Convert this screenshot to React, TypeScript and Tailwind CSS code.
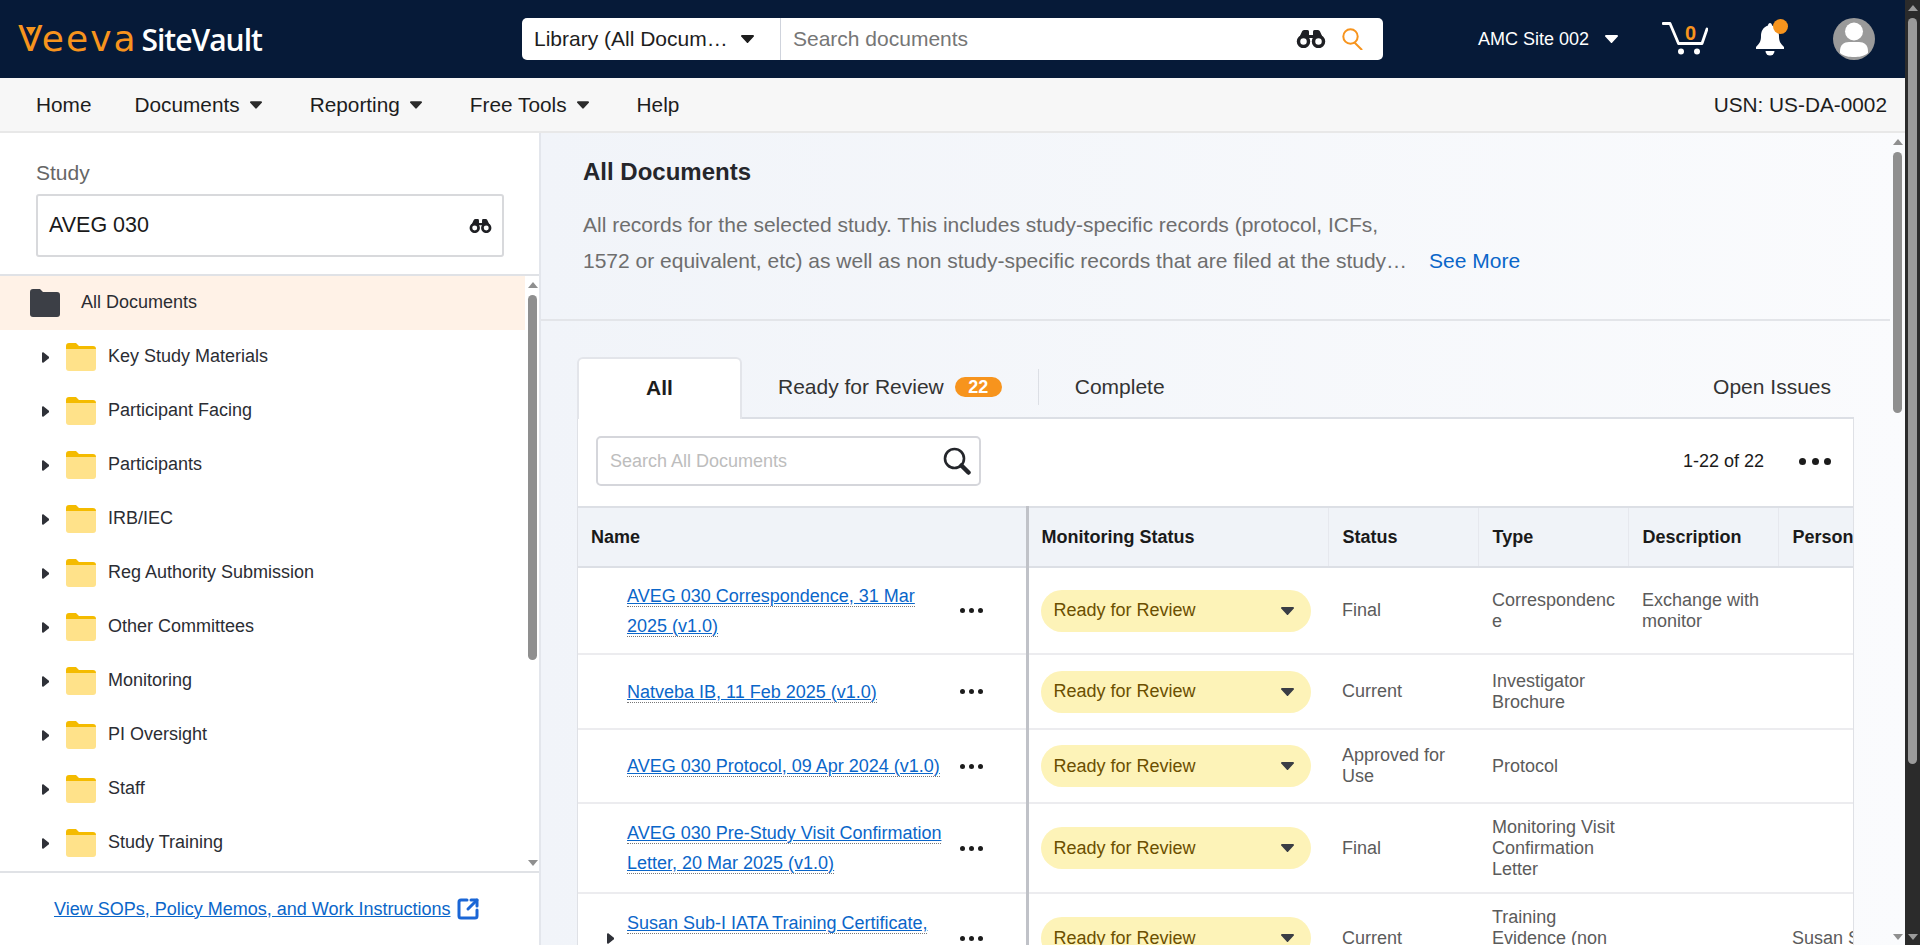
import React from 'react';
import { SquareArrowOutUpRight } from 'lucide-react';

const treeItems = [
  'Key Study Materials',
  'Participant Facing',
  'Participants',
  'IRB/IEC',
  'Reg Authority Submission',
  'Other Committees',
  'Monitoring',
  'PI Oversight',
  'Staff',
  'Study Training',
];

const rows = [
  { h: 'h-[87px]', name: 'AVEG 030 Correspondence, 31 Mar 2025 (v1.0)', status: 'Final', type: 'Correspondence', desc: 'Exchange with monitor', person: '' },
  { h: 'h-[75px]', name: 'Natveba IB, 11 Feb 2025 (v1.0)', status: 'Current', type: 'Investigator Brochure', desc: '', person: '' },
  { h: 'h-[74px]', name: 'AVEG 030 Protocol, 09 Apr 2024 (v1.0)', status: 'Approved for Use', type: 'Protocol', desc: '', person: '' },
  { h: 'h-[90px]', name: 'AVEG 030 Pre-Study Visit Confirmation Letter, 20 Mar 2025 (v1.0)', status: 'Final', type: 'Monitoring Visit Confirmation Letter', desc: '', person: '' },
  { h: 'h-[90px]', name: 'Susan Sub-I IATA Training Certificate,', status: 'Current', type: 'Training Evidence (non', desc: '', person: 'Susan Sub-I', cut: true },
];

function CaretDown({ className }: { className: string }) {
  return (
    <svg viewBox="0 0 13 8" className={className} fill="currentColor">
      <path d="M1 0h11a1 1 0 0 1 .8 1.600L7.300 7.600a1 1 0 0 1-1.600 0L.2 1.600A1 1 0 0 1 1 0z" />
    </svg>
  );
}

function CaretRight() {
  return (
    <svg viewBox="0 0 7 11" className="h-[11px] w-[7px] text-[#2f3138]" fill="currentColor">
      <path d="M0 1.200C0 .2 1 0 1.600.5l5 4a1.200 1.200 0 0 1 0 2l-5 4c-.6.5-1.600.3-1.600-.7z" />
    </svg>
  );
}

function Folder({ dark }: { dark?: boolean }) {
  return (
    <svg viewBox="0 0 30 28" className="h-[28px] w-[30px] shrink-0">
      <path fill={dark ? '#3c3f46' : '#f4bb00'} d="M0 3a3 3 0 0 1 3-3h7l3 3h14a3 3 0 0 1 3 3v3H0z" />
      <path fill={dark ? '#3c3f46' : '#ffe28a'} d="M0 6h30v19a3 3 0 0 1-3 3H3a3 3 0 0 1-3-3z" />
    </svg>
  );
}

function Binoculars({ className }: { className: string }) {
  return (
    <svg viewBox="0 0 30 18" className={className}>
      <path fill="#1f2024" d="M3 8l3-6.500C6.500.5 7.500 0 8.500 0h3c1 0 1.500.8 1.500 2v3h4V2c0-1.200.5-2 1.500-2h3c1 0 2 .5 2.500 1.500L27 8z" />
      <circle cx="7.500" cy="11.500" r="5" fill="#fff" stroke="#1f2024" strokeWidth="3.500" />
      <circle cx="22.500" cy="11.500" r="5" fill="#fff" stroke="#1f2024" strokeWidth="3.500" />
    </svg>
  );
}

function Dots({ big }: { big?: boolean }) {
  const dot = big ? 'h-[7px] w-[7px] rounded-full bg-[#1c1c1c]' : 'h-[5px] w-[5px] rounded-full bg-[#1c1c1c]';
  return (
    <div className={big ? 'flex gap-[5.500px]' : 'flex gap-[4px]'}>
      <span className={dot} />
      <span className={dot} />
      <span className={dot} />
    </div>
  );
}

function ScrollBar({ thumb, outer, className }: { thumb: string; outer?: string; className: string }) {
  const arrow = outer ?? 'text-[#8f8f8f]';
  return (
    <div className={`flex flex-col items-center ${className}`}>
      <svg viewBox="0 0 10 6" className={`h-[6px] w-[10px] shrink-0 ${arrow}`} fill="currentColor">
        <path d="M5 0l5 6H0z" />
      </svg>
      <div className={`mt-[7px] w-[9px] shrink-0 rounded-full ${thumb}`} />
      <div className="flex-1" />
      <svg viewBox="0 0 10 6" className={`h-[6px] w-[10px] shrink-0 ${arrow}`} fill="currentColor">
        <path d="M0 0h10L5 6z" />
      </svg>
    </div>
  );
}

function Header() {
  return (
    <header className="flex h-[78px] shrink-0 items-center bg-[#061a38]">
      <div className="flex w-[522px] shrink-0 items-baseline pl-[18px]">
        <span className="relative font-['DejaVu_Sans',sans-serif] text-[36px] leading-none tracking-[2px] text-[#f7941d]">
          Veeva
          <svg viewBox="0 0 10 9" className="absolute top-[6px] left-[8px] h-[9px] w-[10px]" fill="#f7941d">
            <path d="M0 0h10L5 9z" />
          </svg>
        </span>
        <span className="ml-[4px] font-['Open_Sans',sans-serif] text-[30px] leading-none font-semibold tracking-[-1px] text-white">SiteVault</span>
      </div>
      <div className="flex h-[42px] w-[861px] shrink-0 items-center rounded-[5px] bg-white">
        <div className="flex h-full w-[259px] shrink-0 items-center border-r border-[#cfd3dc] pl-[12px]">
          <span className="text-[21px] text-[#1d1d1d]">Library (All Docum…</span>
          <CaretDown className="ml-[13px] h-[8px] w-[13px] text-[#1d1d1d]" />
        </div>
        <span className="ml-[12px] flex-1 text-[21px] text-[#767676]">Search documents</span>
        <Binoculars className="h-[18px] w-[30px]" />
        <svg viewBox="0 0 22 22" className="mr-[19px] ml-[16px] h-[22px] w-[22px]" fill="none" stroke="#f7941d" strokeWidth="2">
          <circle cx="8.500" cy="8.500" r="7.200" />
          <path d="M13 15l6.500 6.500" strokeLinecap="round" />
        </svg>
      </div>
      <span className="ml-[95px] text-[18px] text-white">AMC Site 002</span>
      <CaretDown className="ml-[16px] h-[8px] w-[13px] text-white" />
      <div className="relative ml-[44px] h-[34px] w-[46px]">
        <svg viewBox="0 0 46 34" className="h-[34px] w-[46px]" fill="none" stroke="#fff" strokeWidth="2.800">
          <path d="M1 1.500h7L16.500 21.500H40L45 7" strokeLinejoin="round" strokeLinecap="round" />
          <circle cx="19" cy="29.500" r="3" fill="#fff" stroke="none" />
          <circle cx="35" cy="29.500" r="3" fill="#fff" stroke="none" />
        </svg>
        <span className="absolute top-[-2px] left-[23px] text-[20px] leading-[26px] font-bold text-[#f7941d]">0</span>
      </div>
      <div className="relative ml-[47px] h-[34px] w-[30px]">
        <svg viewBox="0 0 30 34" className="h-[34px] w-[30px]" fill="#fff">
          <path d="M15 1c1 0 2 1 2 2.500 5 1.500 7 6 7 10.500 0 5 1 7 5 11v2H1v-2c4-4 5-6 5-11 0-4.500 2-9 7-10.500C13 2 14 1 15 1z" />
          <path d="M10.500 29h9a4.500 4.500 0 0 1-9 0z" />
        </svg>
        <span className="absolute top-[-3px] right-[-3px] h-[15px] w-[15px] rounded-full bg-[#f7941d]" />
      </div>
      <div className="ml-[48px] h-[42px] w-[42px] overflow-hidden rounded-full bg-[#9a9a9a]">
        <svg viewBox="0 0 42 42" className="h-[42px] w-[42px]" fill="#fff">
          <circle cx="21" cy="13.500" r="9" />
          <path d="M7 33c0-6 4-9 9-9h10c5 0 9 3 9 9v2c-4 3.500-9 4-14 4s-10-.5-14-4z" />
        </svg>
      </div>
    </header>
  );
}

function Nav() {
  return (
    <nav className="flex h-[55px] shrink-0 items-center gap-[43px] border-b-2 border-[#e8e8e8] bg-[#f7f7f7] pr-[18px] pl-[36px] text-[20.800px] text-[#1d1d1d]">
      <span>Home</span>
      <span className="flex items-center">Documents<CaretDown className="mr-[5px] ml-[10px] h-[8px] w-[12px] text-[#2b2b2b]" /></span>
      <span className="flex items-center">Reporting<CaretDown className="mr-[5px] ml-[10px] h-[8px] w-[12px] text-[#2b2b2b]" /></span>
      <span className="flex items-center">Free Tools<CaretDown className="mr-[5px] ml-[10px] h-[8px] w-[12px] text-[#2b2b2b]" /></span>
      <span>Help</span>
      <span className="ml-auto">USN: US-DA-0002</span>
    </nav>
  );
}

function Sidebar() {
  return (
    <aside className="flex w-[541px] shrink-0 flex-col border-r-2 border-[#e3e6ec] bg-white">
      <div className="h-[143px] shrink-0 border-b-2 border-[#e0e2e6] pt-[28px] pr-[35px] pl-[36px]">
        <div className="text-[21px] leading-[24px] text-[#666]">Study</div>
        <div className="mt-[9px] flex h-[63px] items-center justify-between rounded-[3px] border-2 border-[#d8d9dc] pr-[10px] pl-[11px]">
          <span className="text-[21.500px] text-[#1a1a1a]">AVEG 030</span>
          <Binoculars className="h-[14px] w-[23px]" />
        </div>
      </div>
      <div className="flex h-[595px] shrink-0">
        <ul className="w-[525px] shrink-0 text-[18px] text-[#2b2d33]">
          <li className="flex h-[54px] items-center bg-[#fff2e7] pl-[30px]">
            <Folder dark />
            <span className="ml-[21px] -translate-y-px">All Documents</span>
          </li>
          {treeItems.map((item) => (
            <li key={item} className="flex h-[54px] items-center pl-[42px]">
              <CaretRight />
              <span className="ml-[17px]"><Folder /></span>
              <span className="ml-[12px] -translate-y-px">{item}</span>
            </li>
          ))}
        </ul>
        <ScrollBar className="ml-[3px] w-[9px] pt-[6px] pb-[5px]" thumb="h-[365px] bg-[#8f8f8f]" />
      </div>
      <div className="flex flex-1 items-center border-t-2 border-[#e0e2e6] pl-[54px]">
        <a className="text-[18px] text-[#0a66c9] underline">View SOPs, Policy Memos, and Work Instructions</a>
        <SquareArrowOutUpRight className="ml-[6px] h-[24px] w-[24px] text-[#1a66d6]" strokeWidth={3} />
      </div>
    </aside>
  );
}

function DocsTable() {
  return (
    <div className="overflow-hidden">
      <table className="w-[1350px] table-fixed text-left text-[18px] leading-[21px]">
        <thead>
          <tr className="h-[60px] border-y-2 border-[#dcdfe5] bg-[#f0f3f8] text-[#1a1a1a]">
            <th className="w-[449px] border-r-[3px] border-r-[#c0c2c8] pl-[13px] font-bold">Name</th>
            <th className="w-[301px] border-r border-r-[#e6e8ee] pl-[13px] font-bold">Monitoring Status</th>
            <th className="w-[150px] border-r border-r-[#e6e8ee] pl-[14px] font-bold">Status</th>
            <th className="w-[150px] border-r border-r-[#e6e8ee] pl-[14px] font-bold">Type</th>
            <th className="w-[150px] border-r border-r-[#e6e8ee] pl-[14px] font-bold">Description</th>
            <th className="w-[150px] pl-[14px] font-bold">Person</th>
          </tr>
        </thead>
        <tbody className="text-[#5b5b5b]">
          {rows.map((row) => (
            <tr key={row.name} className={`${row.h} border-b-2 border-[#ececef]`}>
              <td className="border-r-[3px] border-r-[#c0c2c8]">
                <div className="flex items-center">
                  <div className="flex w-[49px] shrink-0 justify-end pr-[13px]">{row.cut && <CaretRight />}</div>
                  <div className={row.cut ? 'min-h-[60px] w-[333px] shrink-0 pr-[12px] leading-[30px]' : 'w-[333px] shrink-0 pr-[12px] leading-[30px]'}>
                    <a className="border-b border-dotted border-[#777] text-[#0a66c9] underline">{row.name}</a>
                  </div>
                  <Dots />
                </div>
              </td>
              <td className="pl-[12px]">
                <div className="flex h-[42px] w-[270px] items-center justify-between rounded-full bg-[#fdf3b8] pr-[17px] pl-[13px] text-[#6b4f00]">
                  <span>Ready for Review</span>
                  <CaretDown className="h-[8px] w-[13px] text-[#3a3d45]" />
                </div>
              </td>
              <td className="pr-[12px] pl-[14px]">{row.status}</td>
              <td className="pr-[12px] pl-[14px] break-words">
                <div className={row.cut ? 'min-h-[63px]' : ''}>{row.type}</div>
              </td>
              <td className="pr-[12px] pl-[14px]">{row.desc}</td>
              <td className="pl-[14px] whitespace-nowrap">{row.person}</td>
            </tr>
          ))}
        </tbody>
      </table>
    </div>
  );
}

function Main() {
  return (
    <main className="flex min-w-0 flex-1 bg-linear-to-r from-[#f1f4f9] to-[#fafbfd]">
      <div className="min-w-0 flex-1 overflow-hidden">
        <section className="h-[188px] border-b-2 border-[#e3e5e9] pt-[25px] pl-[42px]">
          <h1 className="text-[24px] leading-[28px] font-bold text-[#25262b]">All Documents</h1>
          <p className="mt-[21px] text-[21px] leading-[36px] text-[#6e6e6e]">
            All records for the selected study. This includes study-specific records (protocol, ICFs,
            <br />
            1572 or equivalent, etc) as well as non study-specific records that are filed at the study…
            <a className="ml-[22px] text-[#0a66c9]">See More</a>
          </p>
        </section>
        <div className="mt-[36px] ml-[36px] w-[1277px]">
          <div className="flex h-[62px] items-center border-b-2 border-[#dcdfe5] text-[21px] text-[#333]">
            <div className="-mb-[2px] flex h-[62px] w-[165px] items-center justify-center rounded-t-[6px] border-2 border-b-0 border-[#e3e5ea] bg-white pb-[2px] font-bold text-[#1d1d1d]">All</div>
            <span className="ml-[36px]">Ready for Review</span>
            <span className="ml-[11px] flex h-[20px] w-[47px] items-center justify-center rounded-full bg-[#f7941d] text-[18px] font-bold text-white">22</span>
            <span className="ml-[36px] h-[36px] w-px bg-[#dcdfe5]" />
            <span className="ml-[36px]">Complete</span>
            <span className="mr-[23px] ml-auto">Open Issues</span>
          </div>
          <div className="border-x border-[#dfe1e6] bg-white">
            <div className="flex h-[87px] items-center pr-[22px] pb-[3px] pl-[18px]">
              <div className="flex h-[50px] w-[385px] items-center justify-between rounded-[5px] border-2 border-[#d5d6db] pr-[8px] pl-[12px]">
                <span className="text-[18px] text-[#bdbdbd]">Search All Documents</span>
                <svg viewBox="0 0 28 28" className="h-[28px] w-[28px]" fill="none" stroke="#24262b">
                  <circle cx="11.500" cy="11.500" r="9.500" strokeWidth="2.600" />
                  <path d="M18.500 18.500l7 7" strokeWidth="4.500" strokeLinecap="round" />
                </svg>
              </div>
              <span className="ml-auto text-[18px] text-[#1a1a1a]">1-22 of 22</span>
              <div className="ml-[35px]"><Dots big /></div>
            </div>
            <DocsTable />
          </div>
        </div>
      </div>
      <ScrollBar className="mr-[3px] ml-[3px] w-[9px] pt-[6px] pb-[5px]" thumb="h-[261px] bg-[#8f8f8f]" />
    </main>
  );
}

export default function App() {
  return (
    <div className="flex h-[945px] overflow-hidden bg-white font-['Liberation_Sans',Arial,sans-serif]">
      <div className="flex min-w-0 flex-1 flex-col">
        <Header />
        <Nav />
        <div className="flex min-h-0 flex-1">
          <Sidebar />
          <Main />
        </div>
      </div>
      <ScrollBar className="w-[15px] bg-[#2b2b2b] pt-[5px] pb-[5px]" outer="text-[#9b9b9b]" thumb="h-[746px] bg-[#9b9b9b]" />
    </div>
  );
}
